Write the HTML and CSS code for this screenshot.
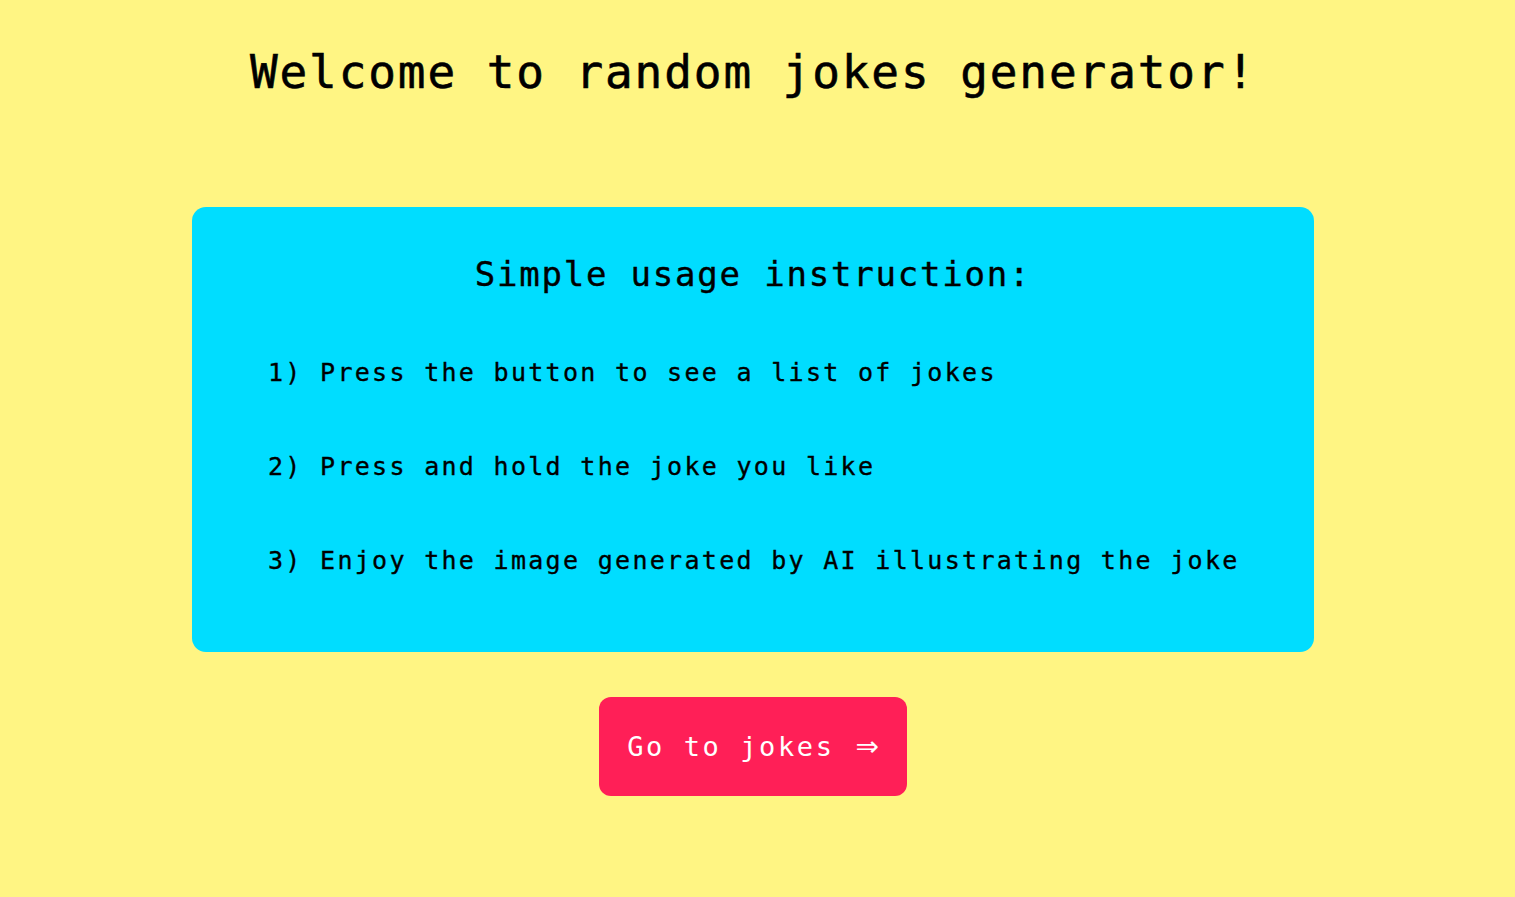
FILE: index.html
```html
<!DOCTYPE html>
<html lang="en">
<head>
<meta charset="utf-8">
<title>Random jokes generator</title>
<link rel="stylesheet" href="styles.css">
</head>
<body>
<main class="page">
  <h1 class="title">Welcome to random jokes generator!</h1>
  <section class="card">
    <h2 class="card-title">Simple usage instruction:</h2>
    <ol class="steps">
      <li>1) Press the button to see a list of jokes</li>
      <li>2) Press and hold the joke you like</li>
      <li>3) Enjoy the image generated by AI illustrating the joke</li>
    </ol>
  </section>
  <a class="btn" href="#">Go to jokes <span class="arrow">⇒</span></a>
</main>
</body>
</html>
```

FILE: styles.css
```css
html, body {
  margin: 0;
  padding: 0;
  background: #fff583;
}
body {
  font-family: "DejaVu Sans Mono", "Liberation Mono", monospace;
  color: #000;
  height: 897px;
  overflow: hidden;
}
.page {
  display: flex;
  flex-direction: column;
  align-items: center;
  padding-right: 9px;
}
.title {
  margin: 42px 0 0;
  font-size: 46px;
  line-height: 60px;
  font-weight: normal;
  letter-spacing: 1.9px;
  -webkit-text-stroke: 0.6px #000;
}
.card {
  margin-top: 105px;
  width: 1122px;
  height: 445px;
  box-sizing: border-box;
  background: #00ddff;
  border-radius: 14px;
  padding: 46px 60px 0 76px;
}
.card-title {
  margin: 0;
  text-align: center;
  padding-right: 16px;
  font-size: 34px;
  line-height: 42px;
  font-weight: normal;
  letter-spacing: 1.8px;
  -webkit-text-stroke: 0.4px #000;
}
.steps {
  list-style: none;
  margin: 63px 0 0;
  padding: 0;
  display: flex;
  flex-direction: column;
  gap: 64px;
}
.steps li {
  font-size: 25px;
  line-height: 30px;
  letter-spacing: 2.3px;
  white-space: nowrap;
  -webkit-text-stroke: 0.35px #000;
}
.btn {
  margin-top: 45px;
  width: 308px;
  height: 99px;
  box-sizing: border-box;
  display: flex;
  align-items: center;
  justify-content: center;
  background: #ff1f57;
  color: #fff;
  border-radius: 12px;
  text-decoration: none;
  font-size: 27px;
  letter-spacing: 2.6px;
  white-space: pre;
}
.arrow {
  font-family: "DejaVu Sans", sans-serif;
  font-size: 28px;
  letter-spacing: 0;
  margin-left: 2px;
}
```
